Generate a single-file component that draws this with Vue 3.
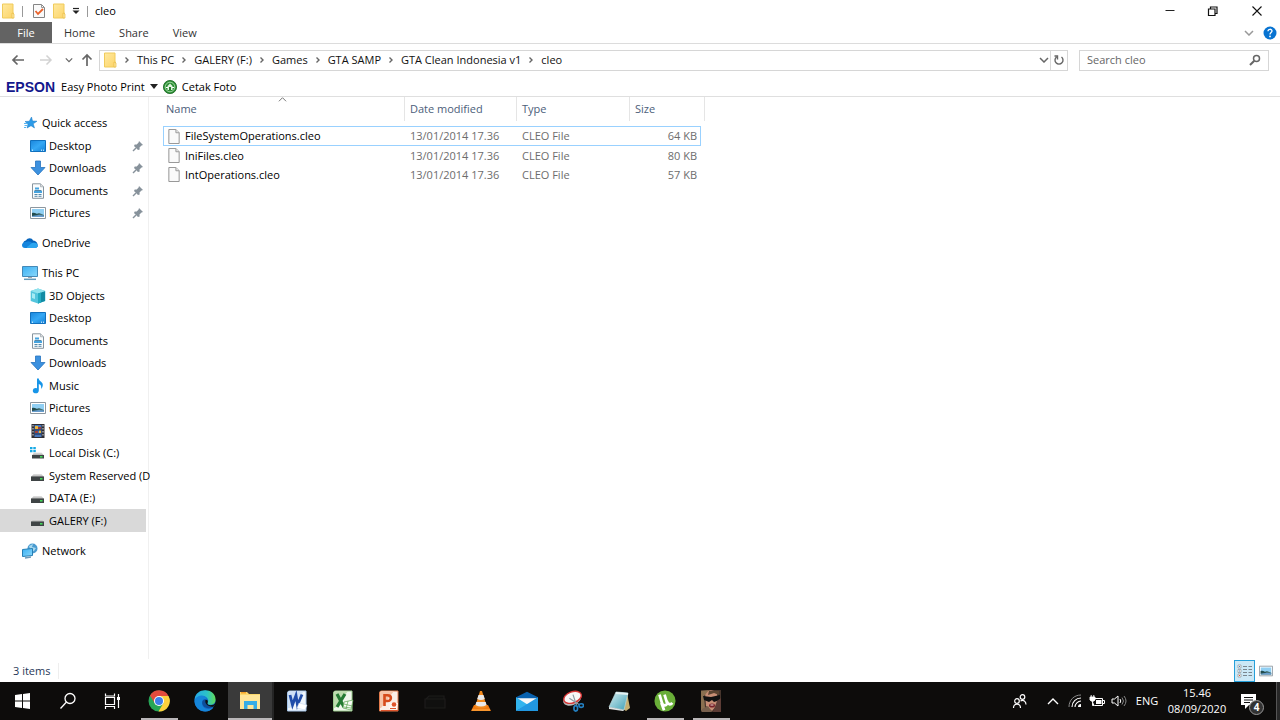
<script setup>
import { ref } from 'vue'

const search = ref('')
const crumbs = ['This PC', 'GALERY (F:)', 'Games', 'GTA SAMP', 'GTA Clean Indonesia v1', 'cleo']
const groups = [
  [
    { name: 'Quick access', icon: 'star', top: true },
    { name: 'Desktop', icon: 'desktop', pin: true },
    { name: 'Downloads', icon: 'download', pin: true },
    { name: 'Documents', icon: 'document', pin: true },
    { name: 'Pictures', icon: 'picture', pin: true },
  ],
  [{ name: 'OneDrive', icon: 'cloud', top: true }],
  [
    { name: 'This PC', icon: 'pc', top: true },
    { name: '3D Objects', icon: 'cube' },
    { name: 'Desktop', icon: 'desktop' },
    { name: 'Documents', icon: 'document' },
    { name: 'Downloads', icon: 'download' },
    { name: 'Music', icon: 'music' },
    { name: 'Pictures', icon: 'picture' },
    { name: 'Videos', icon: 'video' },
    { name: 'Local Disk (C:)', icon: 'windisk' },
    { name: 'System Reserved (D', icon: 'disk' },
    { name: 'DATA (E:)', icon: 'disk' },
    { name: 'GALERY (F:)', icon: 'disk', selected: true },
  ],
  [{ name: 'Network', icon: 'network', top: true }],
]
const files = [
  { name: 'FileSystemOperations.cleo', date: '13/01/2014 17.36', type: 'CLEO File', size: '64 KB', focus: true },
  { name: 'IniFiles.cleo', date: '13/01/2014 17.36', type: 'CLEO File', size: '80 KB' },
  { name: 'IntOperations.cleo', date: '13/01/2014 17.36', type: 'CLEO File', size: '57 KB' },
]
const system = [
  { name: 'Start', icon: 'windows' },
  { name: 'Search', icon: 'lens' },
  { name: 'Task View', icon: 'taskview' },
]
const apps = [
  { name: 'Chrome', icon: 'chrome', running: true },
  { name: 'Edge', icon: 'edge' },
  { name: 'File Explorer', icon: 'explorer', active: true },
  { name: 'Word', icon: 'word' },
  { name: 'Excel', icon: 'excel' },
  { name: 'PowerPoint', icon: 'powerpoint' },
  { name: 'Drive', icon: 'darkdrive' },
  { name: 'VLC', icon: 'vlc' },
  { name: 'Mail', icon: 'mail' },
  { name: 'Snipping Tool', icon: 'snip' },
  { name: 'Notepad', icon: 'notepad' },
  { name: 'uTorrent', icon: 'utorrent', running: true },
  { name: 'GTA', icon: 'gta', running: true },
]
</script>

<template>
  <div class="window">
    <svg class="sprite" aria-hidden="true">
      <defs>
        <linearGradient id="gBlue" x1="0" y1="0" x2="1" y2="1"><stop offset="0" stop-color="#1a86dc" /><stop offset=".5" stop-color="#35a8f5" /><stop offset="1" stop-color="#1583d8" /></linearGradient>
        <linearGradient id="gFold" x1="0" y1="0" x2="1" y2="1"><stop offset="0" stop-color="#ffe9a0" /><stop offset="1" stop-color="#fcd468" /></linearGradient>
        <linearGradient id="gPc" x1="0" y1="0" x2="1" y2="1"><stop offset="0" stop-color="#3ab0f3" /><stop offset="1" stop-color="#8ad8fb" /></linearGradient>
        <linearGradient id="gEdge" x1="0" y1="0" x2="1" y2="0"><stop offset="0" stop-color="#25a8e8" /><stop offset=".6" stop-color="#2cc3c6" /><stop offset="1" stop-color="#62dc55" /></linearGradient>
        <linearGradient id="gNote" x1="0" y1="0" x2="1" y2="1"><stop offset="0" stop-color="#d8f0f2" /><stop offset="1" stop-color="#3d9fb5" /></linearGradient>
        <linearGradient id="gDisk" x1="0" y1="0" x2="0" y2="1"><stop offset="0" stop-color="#e4e4e4" /><stop offset="1" stop-color="#aaa" /></linearGradient>
      </defs>
      <symbol id="folder" viewBox="0 0 14 16"><path d="M1.500 1h10.500v9h.5v5h-11z" fill="url(#gFold)" stroke="#f0cb5b" /><path d="M11 10l2 1v4h-2z" fill="#ffe9a0" stroke="#e8bc45" stroke-width=".7" /></symbol>
      <symbol id="check" viewBox="0 0 14 16"><path d="M1.500 1.500h8l3 3v10h-11z" fill="#fafafa" stroke="#858585" /><path d="M9.500 1.500v3h3" fill="none" stroke="#999" /><path d="M3.500 8l2.500 3 5-5" fill="none" stroke="#e9622b" stroke-width="1.800" /></symbol>
      <symbol id="file" viewBox="0 0 12 16"><path d="M.5.5h7.500l3.500 3.500v11.500H.5z" fill="#fafafa" stroke="#8f8f8f" /><path d="M8 .5V4h3.500" fill="#e5e5e5" stroke="#999" /></symbol>
      <symbol id="chevR" viewBox="0 0 6 8"><path d="M1.500 1.500L4 4 1.500 6.500" fill="none" stroke="#666" stroke-width="1.400" /></symbol>
      <symbol id="chevD" viewBox="0 0 10 6"><path d="M1 1l4 4 4-4" fill="none" stroke="currentColor" stroke-width="1.500" /></symbol>
      <symbol id="chevU" viewBox="0 0 12 7"><path d="M1 6l5-5 5 5" fill="none" stroke="currentColor" stroke-width="1.400" /></symbol>
      <symbol id="arrowL" viewBox="0 0 14 12"><path d="M13 6H2M6.500 1.500L2 6l4.500 4.500" fill="none" stroke="currentColor" stroke-width="1.700" /></symbol>
      <symbol id="arrowR" viewBox="0 0 14 12"><path d="M1 6h11M7.500 1.500L12 6l-4.500 4.500" fill="none" stroke="currentColor" stroke-width="1.500" /></symbol>
      <symbol id="arrowU" viewBox="0 0 12 14"><path d="M6 13V2M1.500 6.500L6 2l4.500 4.500" fill="none" stroke="currentColor" stroke-width="1.700" /></symbol>
      <symbol id="tri" viewBox="0 0 8 5"><path d="M0 0h8L4 5z" fill="#222" /></symbol>
      <symbol id="quick" viewBox="0 0 8 8"><path d="M1 1.500h6" stroke="#222" stroke-width="1.200" /><path d="M.5 3.500h7L4 7z" fill="#222" /></symbol>
      <symbol id="refresh" viewBox="0 0 12 12"><path d="M3.500 3A4 4 0 1 0 8.500 3M1.500 2h3v3.500" fill="none" stroke="#666" stroke-width="1.400" /></symbol>
      <symbol id="searchG" viewBox="0 0 12 12"><circle cx="7.500" cy="4.500" r="3" fill="none" stroke="#666" stroke-width="1.500" /><path d="M5.300 6.700L1 11" stroke="#666" stroke-width="2" /></symbol>
      <symbol id="min" viewBox="0 0 12 12"><path d="M1.500 5.500h9" stroke="#222" /></symbol>
      <symbol id="restore" viewBox="0 0 12 12"><path d="M1.500 4h6.500v6.500H1.500zM3.500 4V2H10v6.500H8" fill="none" stroke="#111" stroke-width="1.200" /></symbol>
      <symbol id="close" viewBox="0 0 12 12"><path d="M1.500 1.500l9 9M10.500 1.500l-9 9" stroke="#111" stroke-width="1.100" /></symbol>
      <symbol id="help" viewBox="0 0 14 14"><circle cx="7" cy="7" r="6.500" fill="#0873d1" /><path d="M5 5.300C5 2.600 9 2.700 9 5c0 1.500-2 1.700-2 3.500" fill="none" stroke="#fff" stroke-width="1.300" /><circle cx="7" cy="10.400" r=".9" fill="#fff" /></symbol>
      <symbol id="cetak" viewBox="0 0 14 14"><circle cx="7" cy="7" r="6.600" fill="#2d8f35" stroke="#176420" stroke-width=".8" /><circle cx="7" cy="7" r="4.800" fill="none" stroke="#b8e6b9" stroke-width=".8" /><path d="M4.500 6l2.500-2.500L9.500 6v4h-5z" fill="#dff4df" /><path d="M6 7h2v3H6z" fill="#267b2c" /><path d="M3 7.500h2M9 7.500h2" stroke="#fff" /></symbol>
      <symbol id="pin" viewBox="0 0 12 12"><path d="M7 1l4 4-1.500.5-2 2 .2 2L6 10 2 6l.7-1.600 2 .1 1.900-2z" fill="#87929b" /><path d="M4 8l-3 3" stroke="#87929b" stroke-width="1.400" /></symbol>

      <symbol id="star" viewBox="0 0 16 16"><path d="M9.500 2l1 4 4.500.2-3.800 2.600L12.500 13 9 10.700 5 13l1-4-3-2.500 4.300-.2z" fill="#2b9be8" stroke="#1b79c5" stroke-width=".5" /><path d="M2 8.500h3M2.500 10.500h2.500M2 12.500h2" stroke="#55b5f2" /></symbol>
      <symbol id="desktop" viewBox="0 0 16 16"><path d="M.5 2.500h15v11H.5z" fill="url(#gBlue)" stroke="#1170bd" /><path d="M2 12.200h1M11 12.200h1M13 12.200h1" stroke="#fff" /></symbol>
      <symbol id="download" viewBox="0 0 16 16"><path d="M5.500 1h5v6.500H15L8 15 1 7.500h4.500z" fill="#3c91df" stroke="#2674bf" stroke-width=".8" /></symbol>
      <symbol id="document" viewBox="0 0 16 16"><path d="M2.500.8h8l3 3v11.500h-11z" fill="#fafcfd" stroke="#87949e" /><path d="M10.500.8v3h3" fill="#ddd" stroke="#99a4ab" stroke-width=".7" /><path d="M5 4.500h4v2H5zM4 8h8v2H4z" fill="#46a4df" /><path d="M4.500 7.500h7M4.500 11.500h3M8.500 11.500h3M4.500 13.300h3M8.500 13.300h3" stroke="#42799d" stroke-width=".9" /></symbol>
      <symbol id="picture" viewBox="0 0 16 16"><path d="M.5 2.500h15v11H.5z" fill="#fff" stroke="#8d979f" /><path d="M2 4h12v8H2z" fill="#90cff3" /><path d="M2 8l4 1 3-1 5 2v2H2z" fill="#456f70" /><path d="M2 8c3-1 4 1 7 2l-7 1z" fill="#214c4e" /><path d="M2 11l7-1 5 .5V12H2z" fill="#689dce" /></symbol>
      <symbol id="cloud" viewBox="0 0 16 16"><path d="M1.500 9C1 6.500 3 5.500 4 5.500 5.500 2.500 10 2.500 11 5.500c2 0 4 1.500 4.500 3.500v3H2z" fill="#0765bd" /><path d="M0 10c0-2 2-3.500 4-3 2.500-1.500 5 0 6 1 3-1 5.500.5 5.500 2.500 0 2-1 2.500-3 2.500H3C1 13 0 12 0 10z" fill="#1585dd" /><path d="M5 12l5-4c4-1 6 1 5.500 3-.5 1.500-1 2-3 2H5z" fill="#2ba5ef" /></symbol>
      <symbol id="pc" viewBox="0 0 16 16"><path d="M.5 1.500h15v10H.5z" fill="url(#gPc)" stroke="#4589b7" /><path d="M6 12h4v1H6z" fill="#aaa" /><path d="M2 14.300h12" stroke="#6399b9" stroke-width="1.500" /></symbol>
      <symbol id="cube" viewBox="0 0 16 16"><path d="M.7 3L8 .5 15.300 3v10L8 15.500.7 13z" fill="#54c5dd" /><path d="M8 5.500L15 3v10l-7 2.500z" fill="#118ba4" /><path d="M.7 3L8 5.500 15.300 3 8 .5z" fill="#91e3ee" /><path d="M8 5.500l3-1v10l-3 1z" fill="#24acc3" /><path d="M2 5l3 1v5l-3-1z" fill="#a6ebf3" /></symbol>
      <symbol id="music" viewBox="0 0 16 16"><path d="M7 .5h1.800c0 3 4 3 4 6.500 0 2-1 3-1.800 4 .6-3-.3-4.500-2.200-5v6.500c0 4-6.300 3.500-6 .2.200-2.500 2.700-3 4.200-2.300z" fill="#1795e8" /></symbol>
      <symbol id="video" viewBox="0 0 16 16"><path d="M1.500 1h13v14h-13z" fill="#2d2d34" /><path d="M4.500 2h7v12h-7z" fill="#4777bc" /><path d="M5 3h3v3H5zM9 7h2v3H9z" fill="#e9b63c" /><path d="M8 4h3v2H8zM5 8h3v2H5z" fill="#a34035" /><path d="M4.500 7h7M4.500 11h7" stroke="#192849" /><path d="M3 2v12M13 2v12" stroke="#ddd" stroke-dasharray="1.500 1.500" /></symbol>
      <symbol id="disk" viewBox="0 0 16 16"><path d="M3.500 6h8l2.500 3H1z" fill="url(#gDisk)" /><path d="M1 8.500h13V13H1z" fill="#3f4445" /><path d="M10 10.800h2.500" stroke="#43e15a" stroke-width="1.500" /></symbol>
      <symbol id="windisk" viewBox="0 0 16 16"><path d="M0 2h2.500v2.200H0zM3.300 2h2.500v2.200H3.300zM0 5h2.500v2.200H0zM3.300 5h2.500v2.200H3.300z" fill="#16a9e5" /><path d="M4 7.500h7.500l2.500 3H2z" fill="url(#gDisk)" /><path d="M2 10h12v3.500H2z" fill="#3f4445" /><path d="M10 11.800h2.500" stroke="#43e15a" stroke-width="1.500" /></symbol>
      <symbol id="network" viewBox="0 0 16 16"><circle cx="10.500" cy="5.500" r="5" fill="#4a9bd0" /><path d="M7 3l4-2-1 3 4 1-2 3-3 1z" fill="#a8d8ee" /><path d="M.5 6.500l10-1v7l-10 1z" fill="url(#gPc)" stroke="#267fb5" /><path d="M3 15l6-1" stroke="#6c9aba" stroke-width="1.300" /></symbol>

      <symbol id="windows" viewBox="0 0 22 22"><path d="M3 5l7-1v6.500H3zM11 4l7-1v7.500h-7zM3 11.500h7V18l-7-1zM11 11.500h7V19l-7-1z" fill="#fff" /></symbol>
      <symbol id="lens" viewBox="0 0 22 22"><circle cx="13" cy="8.500" r="5" fill="none" stroke="#fff" stroke-width="1.300" /><path d="M9.500 12L3.500 18.500" stroke="#fff" stroke-width="1.300" /></symbol>
      <symbol id="taskview" viewBox="0 0 22 22"><path d="M3.500 7.500h9v7h-9zM3.500 3.500V6h9V3.500M3.500 19v-2.500h9V19M16.500 4v14" fill="none" stroke="#fff" stroke-width="1.200" /><path d="M15 7h3v3h-3z" fill="#fff" /></symbol>
      <symbol id="chrome" viewBox="0 0 22 22"><circle cx="11" cy="11" r="10.500" fill="#27a658" /><path d="M2 5.500A10.500 10.500 0 0 1 20.500 6H11L7 13.500z" fill="#e34b3d" /><path d="M11 6h9.500A10.500 10.500 0 0 1 10.500 21.500L15.500 13z" fill="#fdd03c" /><circle cx="11" cy="11" r="5" fill="#fff" /><circle cx="11" cy="11" r="4" fill="#3e7eea" /></symbol>
      <symbol id="edge" viewBox="0 0 24 24"><circle cx="12" cy="12" r="11.500" fill="#1469c6" /><path d="M.6 11C1-3 23-3 23.500 10c0 5-4 7-8 5.700-2-.7 0-2 0-4C15 6 6 4 .6 11z" fill="url(#gEdge)" /><path d="M1 10c4-6 12-5 13 0-4-1-6 2-5 6s6 6.500 12 3c-5 8-20 5-20.500-7z" fill="#1585d9" /><path d="M9 15c-.5-3 1-5 4-4.700 2 .6 2 2 1.500 3.700 0 3 5 4 8.800 1L21.500 18C16 21.500 10 19.500 9 15z" fill="#0d4e9a" /><path d="M12.500 11c3-1 3 2 2 3.500 0 2 3 2.500 7 1.500l2-2v2l-2 2c-5 1-10-2-9-7z" fill="#101010" /></symbol>
      <symbol id="explorer" viewBox="0 0 22 22"><path d="M1 2h7l2 2h11v15H1z" fill="#fbd86c" /><path d="M1 5h20v14H1z" fill="#ffe699" /><path d="M2 2h5v1.500H2z" fill="#f7a428" /><path d="M5 19v-8h13v8h-3.500v-4h-6v4z" fill="#36ade7" /></symbol>
      <symbol id="word" viewBox="0 0 22 22"><path d="M1.500 3q0-2 2-2H20v20H1.500z" fill="#f0f6fc" stroke="#a5c4e8" /><path d="M2 3q0-2 2-2h14L4 18H2z" fill="#cfe1f6" /><path d="M4 5l2.500 10L10 5.500l1.500 9.500L16 4.500" fill="none" stroke="#204da9" stroke-width="2.800" /><path d="M13 13l8 2-2 5-8-2z" fill="#fff" stroke="#bdd1ea" stroke-width=".5" /></symbol>
      <symbol id="excel" viewBox="0 0 22 22"><path d="M1.500 3q0-2 2-2H20v20H1.500z" fill="#f0f7ec" stroke="#9bcb8e" /><path d="M2 3q0-2 2-2h12L3 18H2z" fill="#bddcae" /><path d="M5 4l7 13M13 4L5 17" stroke="#247a33" stroke-width="3.200" /><path d="M12 12l9-2-2 10-8-2z" fill="#f7fcf4" stroke="#5aa552" stroke-width=".7" /><path d="M12 14l8 2M12 17l7 1M16 11l-2 8" stroke="#5aa552" stroke-width=".7" /></symbol>
      <symbol id="powerpoint" viewBox="0 0 22 22"><path d="M1.500 3q0-2 2-2H20v20H1.500z" fill="#fbeee7" stroke="#e27b4c" /><path d="M2 3q0-2 2-2h12L3 18H2z" fill="#f6c4a9" /><path d="M6.500 16V5.200h3c4.500 0 4.500 5.800 0 5.800h-3" fill="none" stroke="#d64b1c" stroke-width="2.600" /><path d="M12 13h8l-1 6h-8z" fill="#fff7f2" /><circle cx="16" cy="14.500" r="2.300" fill="#df542c" /><path d="M12 18.500h6M3 20.500h17" stroke="#df542c" /></symbol>
      <symbol id="darkdrive" viewBox="0 0 22 22"><path d="M2 9l3-3h15v3M1 9h20v9H1z" fill="#10100f" stroke="#1d1c1b" stroke-width="1.200" /></symbol>
      <symbol id="vlc" viewBox="0 0 22 22"><path d="M4 15h14l3 6H1z" fill="#ef7910" /><path d="M10 1h2l5 16q-6 3-12 0z" fill="#f28a1d" /><path d="M8.500 5h5l1.300 4q-4 2-7.600 0zM6.300 12h9.400l.9 3q-5.600 3-11.200 0z" fill="#e9e9e9" /><path d="M2 20h18" stroke="#ffb34c" /></symbol>
      <symbol id="mail" viewBox="0 0 24 22"><path d="M0 7l12-6 12 6v14H0z" fill="#0961ad" /><path d="M1 8h22L12 16z" fill="#f8f8f8" /><path d="M0 7l13 8L0 22z" fill="#32b4ee" /><path d="M24 7L0 22h24z" fill="#2198e2" /></symbol>
      <symbol id="snip" viewBox="0 0 24 24"><ellipse cx="11" cy="10.500" rx="10" ry="6" transform="rotate(-20 11 10.500)" fill="#b8b8b8" /><ellipse cx="11.500" cy="8" rx="10" ry="6" transform="rotate(-20 11.500 8)" fill="#f7f7f7" stroke="#d73535" stroke-width="1.500" /><path d="M12 5l4 12M8 9l11 7" stroke="#8e9ca4" stroke-width="1.300" /><ellipse cx="15" cy="20" rx="2" ry="3" fill="none" stroke="#2380c2" stroke-width="1.800" /><ellipse cx="21" cy="17" rx="2.500" ry="2" fill="none" stroke="#2380c2" stroke-width="1.800" /></symbol>
      <symbol id="notepad" viewBox="0 0 22 22"><path d="M19 3l3 15-4 3-3-2z" fill="#c6b071" /><path d="M8 2l12 1-4 17L1 17z" fill="url(#gNote)" stroke="#b7d5d9" stroke-width=".7" /><path d="M8 2l12 1v2L7.500 4z" fill="#e4f2f3" /><path d="M1 17l15 3-1 1-14-2z" fill="#e0e4e4" /></symbol>
      <symbol id="utorrent" viewBox="0 0 24 24"><circle cx="12" cy="12" r="11.500" fill="#69ae38" /><path d="M6 5l2.500 8.500c1 4.500 6.500 4 5.500 0L11.500 5M14 12c1 4 4 4.500 6 2M8 14l3 8" fill="none" stroke="#fff" stroke-width="3" /></symbol>
      <symbol id="gta" viewBox="0 0 22 22"><path d="M1 0h20v22H1z" fill="#46352c" /><path d="M5 2q7-4 12 1l1 11-6 7-6-5z" fill="#c78e75" /><path d="M1 1l8-1-5 6 1 12-4 3z" fill="#8a7050" /><path d="M9 1h10v4l-5-2-6 2z" fill="#5b4431" /><path d="M3 6l8 1 9-2v5l-6 2-2-2-3 2-5-2z" fill="#111" /><path d="M17 11l4-3v14h-8z" fill="#5d3d36" /><ellipse cx="12" cy="15.500" rx="3" ry="2" fill="#78222b" /><path d="M10.500 15h3" stroke="#efd8cf" /><path d="M2 19l6-3 4 6H2z" fill="#78604d" /></symbol>
      <symbol id="people" viewBox="0 0 16 16"><circle cx="5" cy="8" r="2.300" fill="none" stroke="#fff" stroke-width="1.200" /><circle cx="10.500" cy="4" r="2.300" fill="none" stroke="#fff" stroke-width="1.200" /><path d="M1.500 15c0-5 7-5 7 0M8.500 8c3-1.500 5.500.5 5.500 3.500" fill="none" stroke="#fff" stroke-width="1.200" /></symbol>
      <symbol id="wifi" viewBox="0 0 14 14"><path d="M1 13C1 6 6 1 13 1" fill="none" stroke="#888" /><path d="M4 13c0-5 4-9 9-9M7 13c0-3 3-6 6-6" fill="none" stroke="#fff" stroke-width="1.100" /><path d="M10 13q0-3 3-3v3z" fill="#fff" /></symbol>
      <symbol id="battery" viewBox="0 0 16 14"><path d="M5.500 4.500h8v7h-8M14 6.500h1.500v3H14" fill="none" stroke="#fff" /><path d="M7 6h5.500v4H7z" fill="#fff" /><path d="M1 3h5v3q-2.500 3-5 0zM3.500 7v4.500h2M2.200 1v2M4.800 1v2" fill="#fff" stroke="#fff" stroke-width=".9" /></symbol>
      <symbol id="sound" viewBox="0 0 16 14"><path d="M1 5h2.500L7 2v10L3.500 9H1z" fill="none" stroke="#fff" /><path d="M9 5q1.500 2 0 4" fill="none" stroke="#fff" /><path d="M11 3.500q3 3.500 0 7M13 2q4 5 0 10" fill="none" stroke="#888" /></symbol>
      <symbol id="action" viewBox="0 0 16 16"><path d="M0 1h15v11H8l-4 4v-4H0z" fill="#fff" /><path d="M3 4.500h9M3 7h9M3 9.500h6" stroke="#111" /></symbol>
      <symbol id="details" viewBox="0 0 16 14"><path d="M1 1h3v3H1zM1 5.500h3v3H1zM1 10h3v3H1z" fill="#fff" stroke="#8c9397" stroke-width=".7" /><path d="M2 2.500h1M2 7h1" stroke="#4283c4" /><path d="M2 11.500h1" stroke="#e05438" /><path d="M6 2.500h4M11.500 2.500H15M6 5.500h4M11.500 5.500H15M6 8.500h4M11.500 8.500H15M6 11.500h4M11.500 11.500H15" stroke="#707b82" stroke-width=".9" /></symbol>
    </svg>

    <header>
      <div class="titlebar">
        <svg class="i-fold"><use href="#folder" /></svg>
        <span class="bar"></span>
        <button class="quick" aria-label="Properties"><svg class="i-fold"><use href="#check" /></svg></button>
        <button class="quick" aria-label="New folder"><svg class="i-fold"><use href="#folder" /></svg></button>
        <button class="quick small" aria-label="Customize toolbar"><svg class="i8"><use href="#quick" /></svg></button>
        <span class="bar"></span>
        <span>cleo</span>
        <div class="controls">
          <button aria-label="Minimize"><svg class="i12"><use href="#min" /></svg></button>
          <button aria-label="Restore"><svg class="i12"><use href="#restore" /></svg></button>
          <button aria-label="Close"><svg class="i12"><use href="#close" /></svg></button>
        </div>
      </div>

      <nav class="ribbon">
        <button class="file">File</button>
        <button>Home</button>
        <button>Share</button>
        <button>View</button>
        <div class="ribbon-end">
          <button class="faint" aria-label="Expand ribbon"><svg class="chev"><use href="#chevD" /></svg></button>
          <button aria-label="Help"><svg class="i14"><use href="#help" /></svg></button>
        </div>
      </nav>

      <div class="address">
        <div class="history">
          <button aria-label="Back"><svg class="i14"><use href="#arrowL" /></svg></button>
          <button class="off" aria-label="Forward"><svg class="i14"><use href="#arrowR" /></svg></button>
          <button class="narrow" aria-label="Recent"><svg class="i8"><use href="#chevD" /></svg></button>
          <button class="narrow" aria-label="Up"><svg class="i14"><use href="#arrowU" /></svg></button>
        </div>
        <div class="path">
          <svg class="i-fold"><use href="#folder" /></svg>
          <template v-for="c in crumbs" :key="c">
            <svg class="sep"><use href="#chevR" /></svg>
            <button>{{ c }}</button>
          </template>
          <button class="drop" aria-label="Previous locations"><svg class="chev"><use href="#chevD" /></svg></button>
          <button class="reload" aria-label="Refresh"><svg class="i12"><use href="#refresh" /></svg></button>
        </div>
        <label class="search">
          <input v-model="search" type="text" placeholder="Search cleo" aria-label="Search cleo" />
          <svg class="i12"><use href="#searchG" /></svg>
        </label>
      </div>

      <div class="epson">
        <strong>EPSON</strong>
        <button class="easy">Easy Photo Print <svg class="tri"><use href="#tri" /></svg></button>
        <button class="cetak"><svg class="i14"><use href="#cetak" /></svg>Cetak Foto</button>
      </div>
    </header>

    <main>
      <nav class="tree" aria-label="Folders">
        <ul v-for="(g, n) in groups" :key="n">
          <li v-for="item in g" :key="item.name">
            <a href="#" :class="{ top: item.top, selected: item.selected }">
              <svg class="i16"><use :href="'#' + item.icon" /></svg>
              <span>{{ item.name }}</span>
              <svg v-if="item.pin" class="pin"><use href="#pin" /></svg>
            </a>
          </li>
        </ul>
      </nav>

      <section class="content">
        <table>
          <colgroup><col class="c-name" /><col class="c-date" /><col class="c-type" /><col class="c-size" /></colgroup>
          <thead>
            <tr>
              <th>Name<svg class="sort"><use href="#chevU" /></svg></th>
              <th>Date modified</th>
              <th>Type</th>
              <th>Size</th>
            </tr>
          </thead>
          <tbody>
            <tr v-for="f in files" :key="f.name" :class="{ focus: f.focus }">
              <td class="name"><div><svg class="fileicon"><use href="#file" /></svg>{{ f.name }}</div></td>
              <td>{{ f.date }}</td>
              <td>{{ f.type }}</td>
              <td class="size">{{ f.size }}</td>
            </tr>
          </tbody>
        </table>
      </section>
    </main>

    <div class="status">
      <span>3 items</span>
      <div class="views">
        <button class="on" aria-label="Details"><svg class="i16"><use href="#details" /></svg></button>
        <button aria-label="Large icons"><svg class="i14"><use href="#picture" /></svg></button>
      </div>
    </div>

    <footer class="taskbar">
      <div class="system">
        <button v-for="s in system" :key="s.name" :aria-label="s.name"><svg class="i22"><use :href="'#' + s.icon" /></svg></button>
      </div>
      <div class="apps">
        <button v-for="a in apps" :key="a.name" :aria-label="a.name" :class="{ running: a.running, active: a.active }"><svg class="i22"><use :href="'#' + a.icon" /></svg></button>
      </div>
      <div class="tray">
        <button class="people" aria-label="People"><svg class="i16"><use href="#people" /></svg></button>
        <button class="trayicon" aria-label="Hidden icons"><svg class="up"><use href="#chevU" /></svg></button>
        <button class="trayicon" aria-label="Network"><svg class="i14"><use href="#wifi" /></svg></button>
        <button class="trayicon" aria-label="Battery"><svg class="i16"><use href="#battery" /></svg></button>
        <button class="trayicon" aria-label="Volume"><svg class="i16"><use href="#sound" /></svg></button>
        <button class="lang">ENG</button>
        <button class="clock"><span>15.46</span><span>08/09/2020</span></button>
        <button class="notice" aria-label="Notifications"><svg class="i16"><use href="#action" /></svg><span class="badge">4</span></button>
        <button class="show" aria-label="Show desktop"></button>
      </div>
    </footer>
  </div>
</template>

<style>
body { margin: 0; background: #fff; }
</style>

<style scoped>
* { box-sizing: border-box; }
.window { display: flex; flex-direction: column; min-height: 100vh; background: #fff; color: #000; font: 11px/16px "Open Sans", "Noto Sans", sans-serif; }
.sprite { position: absolute; width: 0; height: 0; }
svg { display: block; flex: none; }
button { margin: 0; padding: 0; border: 0; background: none; color: inherit; font: inherit; white-space: nowrap; display: flex; align-items: center; justify-content: center; }
.i8 { width: 8px; height: 8px; }
.i12 { width: 12px; height: 12px; }
.i14 { width: 14px; height: 14px; }
.i16 { width: 16px; height: 16px; }
.i22 { width: 22px; height: 22px; }
.chev { width: 10px; height: 6px; }
.i-fold { width: 14px; height: 16px; }

.titlebar { display: flex; align-items: center; height: 22px; padding-left: 1px; }
.bar { width: 1px; height: 11px; margin: 0 7px; background: #999; }
.quick { margin-left: 2px; margin-right: 4px; }
.quick.small { margin: 0 0 0 2px; }
.controls { display: flex; margin-left: auto; }
.controls button { width: 43px; height: 20px; }
.controls button:last-child { width: 46px; }

.ribbon { display: flex; height: 22px; border-bottom: 1px solid #dcdcdc; color: #333; }
.ribbon > button { padding: 0 12px; }
.ribbon .file { width: 52px; background: #636363; color: #fff; }
.ribbon-end { display: flex; align-items: center; gap: 9px; margin-left: auto; padding-right: 3px; }
.faint { color: #999; }

.address { display: flex; align-items: center; height: 33px; padding: 0 11px 1px 0; color: #666; }
.history { display: flex; align-items: center; width: 99px; padding-left: 4px; }
.history button { width: 28px; height: 20px; }
.history .narrow { width: 18px; }
.history .off { color: #d2d2d2; }
.path { display: flex; align-items: center; flex: 1; height: 21px; border: 1px solid #d6d6d6; padding-left: 3px; color: #111; }
.sep { width: 6px; height: 8px; margin: 0 7px; }
.drop { width: 12px; margin-left: auto; color: #666; }
.reload { width: 17px; height: 19px; border-left: 1px solid #d9d9d9; }
.search { display: flex; align-items: center; width: 190px; height: 21px; margin-left: 11px; padding: 0 7px; border: 1px solid #d6d6d6; }
.search input { flex: 1; min-width: 0; padding: 0; border: 0; outline: 0; background: none; color: #222; font: inherit; }
.search input::placeholder { color: #666; opacity: 1; }

.epson { display: flex; align-items: center; height: 20px; padding-left: 6px; border-bottom: 1px solid #dfdfdf; }
.epson strong { color: #13188c; font: bold 14px/16px "Liberation Sans", Arial, sans-serif; }
.easy { margin-left: 6px; gap: 5px; }
.tri { width: 8px; height: 5px; }
.cetak { margin-left: 5px; gap: 5px; }

main { display: flex; flex: 1; }
.tree { display: flex; flex-direction: column; gap: 8px; width: 149px; padding: 15px 2px 0 0; border-right: 1px solid #f0f0f0; }
.tree ul { margin: 0; padding: 0; list-style: none; }
.tree a { display: flex; align-items: center; gap: 3px; height: 22px; padding-left: 30px; color: inherit; text-decoration: none; white-space: nowrap; }
.tree li:nth-child(even) a { height: 23px; }
.tree a.top { gap: 4px; padding-left: 22px; }
.tree .selected { background: #d9d9d9; }
.pin { width: 12px; height: 12px; margin-left: auto; margin-right: 2px; }

.content { flex: 1; min-width: 0; padding-left: 14px; }
table { width: 542px; border-collapse: separate; border-spacing: 0; table-layout: fixed; }
.c-name { width: 242px; }
.c-date { width: 112px; }
.c-type { width: 113px; }
.c-size { width: 75px; }
th { position: relative; height: 24px; padding: 0 0 0 5px; border-right: 1px solid #e5e5e5; color: #4c607a; font-weight: normal; text-align: left; }
th:first-child { padding-left: 3px; }
.sort { position: absolute; top: 0; left: 50%; margin-left: -6px; width: 9px; height: 5px; color: #777; }
tbody::before { content: ""; display: block; height: 5px; }
tbody tr { position: relative; }
tbody tr.focus::after { content: ""; position: absolute; inset: 0 4px 0 0; border: 1px solid #99d1ff; }
td { height: 19px; padding: 0 0 0 5px; color: #6d6d6d; }
tr.focus td { height: 20px; }
td.name { color: #000; }
td.name div { display: flex; align-items: center; gap: 5px; }
.fileicon { width: 12px; height: 15px; }
td.size { padding-right: 8px; text-align: right; }

.status { display: flex; align-items: center; justify-content: space-between; height: 23px; padding: 0 3px 0 13px; color: #1f3757; }
.status > span { padding-right: 8px; border-right: 1px solid #eee; }
.views { display: flex; align-items: center; }
.views button { width: 22px; height: 22px; }
.views .on { width: 21px; background: #cbe8f6; border: 1px solid #26a0da; }

.taskbar { display: flex; height: 38px; background: #0d0c0b; color: #fff; }
.system, .apps, .tray { display: flex; }
.system button { width: 45px; height: 38px; }
.apps { margin-left: 1px; }
.apps button { position: relative; width: 46px; height: 38px; }
.apps .active { background: #3a3a3a; border-right: 2px solid #252525; }
.apps .running::after, .apps .active::after { content: ""; position: absolute; left: 5px; right: 4px; bottom: 0; height: 2px; background: #b9b6b8; }
.apps .active::after { left: 0; right: 0; }
.tray { margin-left: auto; }
.people { width: 34px; margin-right: 5px; }
.trayicon { width: 22px; }
.up { width: 12px; height: 7px; }
.lang { width: 34px; }
.clock { flex-direction: column; width: 66px; }
.clock span { line-height: 16px; }
.notice { position: relative; width: 46px; padding-right: 8px; }
.badge { position: absolute; left: 19px; top: 18px; width: 15px; height: 15px; border: 1px solid #999; border-radius: 50%; background: #333; font: bold 10px/13px "Open Sans", sans-serif; text-align: center; }
.show { width: 4px; background: #282828; border-left: 1px solid #555; }
</style>
